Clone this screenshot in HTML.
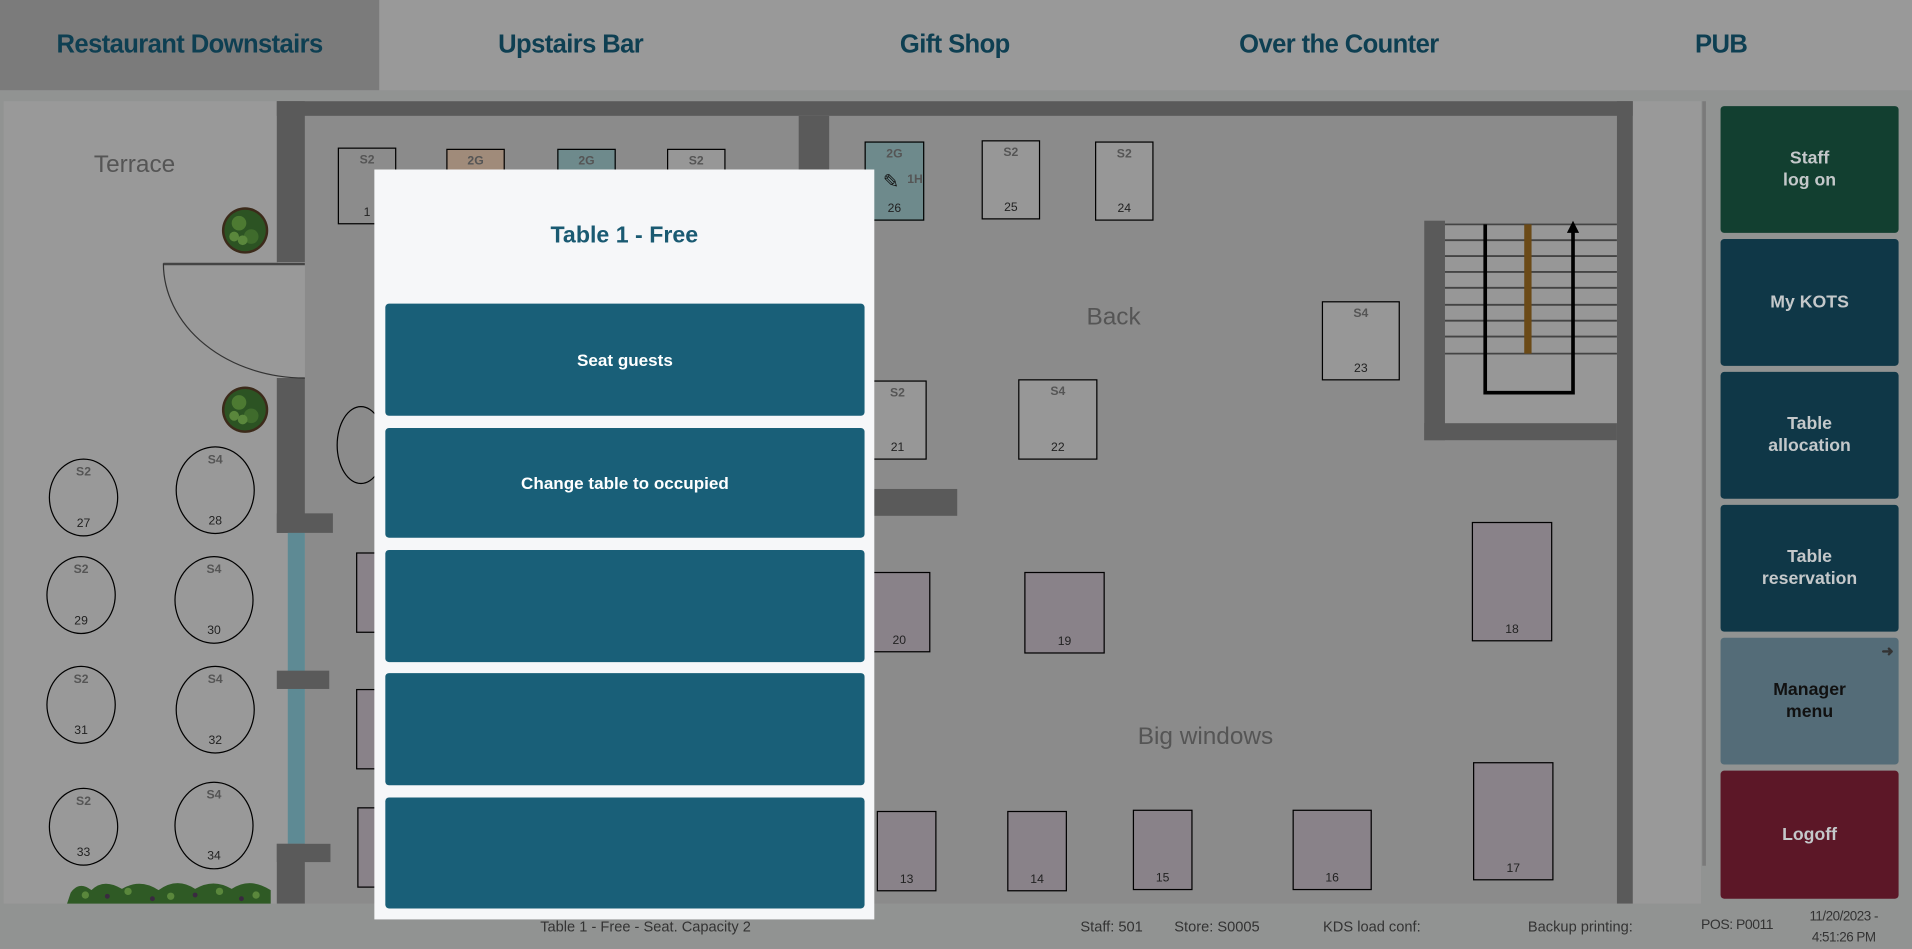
<!DOCTYPE html>
<html><head><meta charset="utf-8">
<style>
*{margin:0;padding:0;box-sizing:border-box}
html,body{width:1912px;height:948px;overflow:hidden;background:#939393;font-family:"Liberation Sans",sans-serif}
#w{position:absolute;left:0;top:0;width:1568px;height:777px;transform:scale(1.21939);transform-origin:0 0;background:#919392}
.a{position:absolute}
.tab{position:absolute;top:0;height:74px;display:flex;align-items:center;justify-content:center;font-weight:bold;font-size:21px;color:#0e3f52;letter-spacing:-0.5px}
.wall{position:absolute;background:#5a5a5a}
.t{position:absolute;border:1px solid #000;background:#979797;font-size:10px;color:#222;text-align:center}
.t .s{position:absolute;top:4px;left:0;right:0;font-weight:bold;color:#555;font-size:10px}
.t .n{position:absolute;bottom:3px;left:0;right:0}
.p{background:#898289}
.c{position:absolute;border:1px solid #000;border-radius:50%;font-size:10px;color:#222;text-align:center}
.c .s{position:absolute;top:5px;left:0;right:0;font-weight:bold;color:#555}
.c .n{position:absolute;bottom:4px;left:0;right:0}
.lbl{position:absolute;font-size:20px;color:#555}
.rb{position:absolute;left:1411px;width:146px;height:104px;border-radius:3px;display:flex;align-items:center;justify-content:center;text-align:center;font-weight:bold;font-size:14.5px;line-height:18px;color:#c4c8ca}
.mb{position:absolute;left:316px;width:393px;background:#195f78;border-radius:3px;color:#fff;font-weight:bold;font-size:14px;display:flex;align-items:center;justify-content:center}
.st{position:absolute;top:753px;font-size:12px;color:#333;white-space:nowrap}
</style></head><body>
<div id="w">
<div class="a" style="left:0;top:0;width:1568px;height:74px;background:#999"></div>
<div class="a" style="left:0;top:0;width:311px;height:74px;background:#7b7b7b"></div>
<div class="tab" style="left:0;width:311px">Restaurant Downstairs</div>
<div class="tab" style="left:311px;width:314px">Upstairs Bar</div>
<div class="tab" style="left:625px;width:316px">Gift Shop</div>
<div class="tab" style="left:941px;width:314px">Over the Counter</div>
<div class="tab" style="left:1255px;width:313px">PUB</div>

<div class="a" style="left:3px;top:83px;width:1392px;height:658px;background:#999"></div>
<div class="a" style="left:250px;top:95px;width:1076px;height:646px;background:#8b8b8b"></div>
<div class="wall" style="left:227px;top:83px;width:1112px;height:12px"></div>
<div class="wall" style="left:1326px;top:83px;width:13px;height:658px"></div>
<div class="wall" style="left:655px;top:95px;width:25px;height:328px"></div>
<div class="wall" style="left:655px;top:401px;width:130px;height:22px"></div>
<div class="wall" style="left:227px;top:83px;width:23px;height:132px"></div>
<div class="wall" style="left:227px;top:310px;width:23px;height:127px"></div>
<div class="wall" style="left:227px;top:421px;width:46px;height:16px"></div>
<div class="a" style="left:236px;top:437px;width:14px;height:255px;background:#5e8a94"></div>
<div class="wall" style="left:227px;top:550px;width:43px;height:15px"></div>
<div class="wall" style="left:227px;top:692px;width:23px;height:49px"></div>
<div class="wall" style="left:227px;top:692px;width:44px;height:15px"></div>
<div class="a" style="left:228px;top:215px;width:22px;height:95px;background:#999"></div>
<svg class="a" style="left:0;top:0" width="1568" height="777">
<line x1="134" y1="216.5" x2="250" y2="216.5" stroke="#444" stroke-width="2"/>
<path d="M134 216 A116 94 0 0 0 250 310" fill="none" stroke="#333" stroke-width="1"/>
<rect x="1168" y="181" width="17" height="180" fill="#5a5a5a"/>
<rect x="1168" y="347" width="158" height="14" fill="#5a5a5a"/>
<rect x="1185" y="183" width="141" height="164" fill="#979797"/>
<g stroke="#444" stroke-width="1.5">
<line x1="1185" y1="184" x2="1326" y2="184"/><line x1="1185" y1="197" x2="1326" y2="197"/>
<line x1="1185" y1="210" x2="1326" y2="210"/><line x1="1185" y1="223" x2="1326" y2="223"/>
<line x1="1185" y1="236" x2="1326" y2="236"/><line x1="1185" y1="250" x2="1326" y2="250"/>
<line x1="1185" y1="263" x2="1326" y2="263"/><line x1="1185" y1="276" x2="1326" y2="276"/>
<line x1="1185" y1="290" x2="1326" y2="290"/></g>
<rect x="1250" y="184" width="6" height="106" fill="#6b4a17"/>
<path d="M1218 184 V322 H1290 V190" fill="none" stroke="#000" stroke-width="3"/>
<path d="M1285 191 L1290 181 L1295 191 Z" fill="#000"/>
<circle cx="201" cy="189" r="19" fill="#3c2a1a"/><circle cx="201" cy="189" r="17" fill="#2c5323"/>
<circle cx="196" cy="183" r="6" fill="#4d7a32"/><circle cx="206" cy="194" r="6" fill="#3f6b2c"/><circle cx="199" cy="197" r="4" fill="#5a873c"/><circle cx="192" cy="194" r="4" fill="#5a873c"/>
<circle cx="201" cy="336" r="19" fill="#3c2a1a"/><circle cx="201" cy="336" r="17" fill="#2c5323"/>
<circle cx="196" cy="330" r="6" fill="#4d7a32"/><circle cx="206" cy="341" r="6" fill="#3f6b2c"/><circle cx="199" cy="344" r="4" fill="#5a873c"/><circle cx="192" cy="341" r="4" fill="#5a873c"/>
<path d="M55 741 L58 732 Q65 722 75 730 Q85 720 100 729 Q115 720 130 730 Q145 719 160 729 Q175 720 190 729 Q205 719 222 730 V741 Z" fill="#2f5a25"/>
<g fill="#5a873c"><circle cx="70" cy="734" r="3"/><circle cx="105" cy="731" r="3"/><circle cx="140" cy="735" r="3"/><circle cx="180" cy="731" r="3"/><circle cx="210" cy="734" r="3"/></g>
<g fill="#3a2a40"><circle cx="88" cy="735" r="2"/><circle cx="125" cy="737" r="2"/><circle cx="160" cy="734" r="2"/><circle cx="198" cy="737" r="2"/></g>
<line x1="1397.5" y1="83" x2="1397.5" y2="710" stroke="#7a7a7a" stroke-width="3"/>
</svg>

<div class="lbl" style="left:77px;top:124px">Terrace</div>
<div class="lbl" style="left:891px;top:249px">Back</div>
<div class="lbl" style="left:933px;top:593px">Big windows</div>

<div class="t" style="left:277px;top:121px;width:48px;height:63px;background:#8c8c8c"><div class="s">S2</div><div class="n">1</div></div>
<div class="t" style="left:366px;top:122px;width:48px;height:63px;background:#a08b7a"><div class="s">2G</div></div>
<div class="t" style="left:457px;top:122px;width:48px;height:63px;background:#6e8a8c"><div class="s">2G</div></div>
<div class="t" style="left:547px;top:122px;width:48px;height:63px"><div class="s">S2</div></div>
<div class="t" style="left:709px;top:116px;width:49px;height:65px;background:#6e8a8c"><div class="s">2G</div><div class="a" style="left:34px;top:25px;font-weight:bold;color:#555">1H</div><div class="a" style="left:14px;top:22px;font-size:16px;color:#111">✎</div><div class="n">26</div></div>
<div class="t" style="left:805px;top:115px;width:48px;height:65px"><div class="s">S2</div><div class="n">25</div></div>
<div class="t" style="left:898px;top:116px;width:48px;height:65px"><div class="s">S2</div><div class="n">24</div></div>
<div class="t" style="left:1084px;top:247px;width:64px;height:65px"><div class="s">S4</div><div class="n">23</div></div>
<div class="t" style="left:712px;top:312px;width:48px;height:65px"><div class="s">S2</div><div class="n">21</div></div>
<div class="t" style="left:835px;top:311px;width:65px;height:66px"><div class="s">S4</div><div class="n">22</div></div>
<div class="t p" style="left:712px;top:469px;width:51px;height:66px"><div class="n">20</div></div>
<div class="t p" style="left:840px;top:469px;width:66px;height:67px"><div class="n">19</div></div>
<div class="t p" style="left:1207px;top:428px;width:66px;height:98px"><div class="n">18</div></div>
<div class="t p" style="left:719px;top:665px;width:49px;height:66px"><div class="n">13</div></div>
<div class="t p" style="left:826px;top:665px;width:49px;height:66px"><div class="n">14</div></div>
<div class="t p" style="left:929px;top:664px;width:49px;height:66px"><div class="n">15</div></div>
<div class="t p" style="left:1060px;top:664px;width:65px;height:66px"><div class="n">16</div></div>
<div class="t p" style="left:1208px;top:625px;width:66px;height:97px"><div class="n">17</div></div>
<div class="t p" style="left:292px;top:453px;width:30px;height:66px"></div>
<div class="t p" style="left:292px;top:565px;width:30px;height:66px"></div>
<div class="t p" style="left:293px;top:662px;width:30px;height:66px"></div>
<div class="c" style="left:276px;top:333px;width:40px;height:64px"></div>

<div class="c" style="left:40px;top:376px;width:57px;height:64px"><div class="s">S2</div><div class="n">27</div></div>
<div class="c" style="left:144px;top:366px;width:65px;height:72px"><div class="s">S4</div><div class="n">28</div></div>
<div class="c" style="left:38px;top:456px;width:57px;height:64px"><div class="s">S2</div><div class="n">29</div></div>
<div class="c" style="left:143px;top:456px;width:65px;height:72px"><div class="s">S4</div><div class="n">30</div></div>
<div class="c" style="left:38px;top:546px;width:57px;height:64px"><div class="s">S2</div><div class="n">31</div></div>
<div class="c" style="left:144px;top:546px;width:65px;height:72px"><div class="s">S4</div><div class="n">32</div></div>
<div class="c" style="left:40px;top:646px;width:57px;height:64px"><div class="s">S2</div><div class="n">33</div></div>
<div class="c" style="left:143px;top:641px;width:65px;height:72px"><div class="s">S4</div><div class="n">34</div></div>

<div class="rb" style="top:87px;background:#123f30">Staff<br>log on</div>
<div class="rb" style="top:196px;background:#0f3747">My KOTS</div>
<div class="rb" style="top:305px;background:#0f3747">Table<br>allocation</div>
<div class="rb" style="top:414px;background:#0f3747">Table<br>reservation</div>
<div class="rb" style="top:523px;background:#546c78;color:#111">Manager<br>menu<span class="a" style="right:4px;top:2px;font-size:12px;color:#333">➜</span></div>
<div class="rb" style="top:632px;height:105px;background:#5c1727">Logoff</div>

<div class="st" style="left:443px">Table 1 - Free - Seat. Capacity 2</div>
<div class="st" style="left:886px">Staff: 501</div>
<div class="st" style="left:963px">Store: S0005</div>
<div class="st" style="left:1085px">KDS load conf:</div>
<div class="st" style="left:1253px">Backup printing:</div>
<div class="st" style="left:1395px;font-size:11.5px;letter-spacing:-0.4px">POS: P0011</div>
<div class="st" style="left:1474px;top:744px;width:76px;text-align:center;line-height:17px;font-size:11px;letter-spacing:-0.4px">11/20/2023 -<br>4:51:26 PM</div>

<div class="a" style="left:307px;top:139px;width:410px;height:615px;background:#f6f7f9"></div>
<div class="a" style="left:307px;top:183px;width:410px;text-align:center;font-weight:bold;font-size:19px;color:#1a5a72">Table 1 - Free</div>
<div class="mb" style="top:249px;height:92px">Seat guests</div>
<div class="mb" style="top:351px;height:90px">Change table to occupied</div>
<div class="mb" style="top:451px;height:92px"></div>
<div class="mb" style="top:552px;height:92px"></div>
<div class="mb" style="top:654px;height:91px"></div>
</div>
</body></html>
